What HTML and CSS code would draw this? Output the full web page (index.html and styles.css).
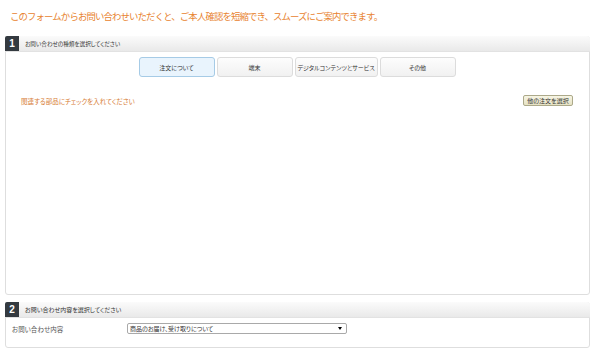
FILE: index.html
```html
<!DOCTYPE html>
<html lang="ja">
<head>
    <meta charset="UTF-8">
    <meta name="viewport" content="width=device-width, initial-scale=1.0">
    <title>お問い合わせ</title>
    <link rel="stylesheet" href="styles.css">
</head>
<body>
<p class="lead">このフォームからお問い合わせいただくと、ご本人確認を短縮でき、スムーズにご案内できます。</p>

<div class="section section-type">
    <div class="section-head">
        <span class="num">1</span>
        <span class="head-text">お問い合わせの種類を選択してください</span>
    </div>
    <div class="section-body">
        <div class="tabs">
            <button type="button" class="tab active">注文について</button>
            <button type="button" class="tab">端末</button>
            <button type="button" class="tab wide">デジタルコンテンツとサービス</button>
            <button type="button" class="tab">その他</button>
        </div>
        <div class="hint-row">
            <span class="hint">関連する部品にチェックを入れてください</span>
            <button type="button" class="small-btn">他の注文を選択</button>
        </div>
    </div>
</div>

<div class="section section-detail">
    <div class="section-head">
        <span class="num">2</span>
        <span class="head-text">お問い合わせ内容を選択してください</span>
    </div>
    <div class="section-body">
        <div class="field">
            <label class="field-label">お問い合わせ内容</label>
            <div class="select">商品のお届け、受け取りについて</div>
        </div>
    </div>
</div>
</body>
</html>
```

FILE: styles.css
```css
body {
    font-family: "Noto Sans CJK JP", "Noto Sans", sans-serif;
    font-feature-settings: "palt";
    margin: 0;
    padding: 0;
    background-color: #fff;
    color: #333;
}
.lead {
    margin: 0;
    padding: 9px 0 0 10px;
    height: 27px;
    box-sizing: border-box;
    font-size: 9.4px;
    letter-spacing: -0.85px;
    font-feature-settings: normal;
    line-height: 14px;
    color: #e8832f;
}
.section {
    margin: 0 10px 0 5px;
    border: 1px solid #dedede;
    border-radius: 3px;
    display: flex;
    flex-direction: column;
}
.section-type {
    margin-top: 9px;
    height: 259px;
    box-sizing: border-box;
}
.section-detail {
    margin-top: 7px;
    height: 46px;
    box-sizing: border-box;
}
.section-head {
    display: flex;
    align-items: center;
    height: 15px;
    margin: -1px -1px 0 -1px;
    background: linear-gradient(#fbfbfb, #e9e9e9);
    border-bottom: 1px solid #e2e2e2;
    border-radius: 3px 3px 0 0;
}
.num {
    width: 14px;
    height: 15px;
    background-color: #343a40;
    color: #fff;
    font-family: "Liberation Sans", Arial, sans-serif;
    font-weight: bold;
    font-size: 10px;
    line-height: 15px;
    text-align: center;
    border-radius: 2px 0 0 0;
}
.head-text {
    margin-left: 6px;
    font-size: 5.6px;
    color: #333;
}
.section-detail .head-text {
    font-size: 6px;
}
.section-body {
    flex: 1;
    padding: 5px 16px 0 15px;
}
.tabs {
    display: flex;
    justify-content: center;
    gap: 2px;
}
.tab {
    width: 76px;
    height: 20px;
    padding: 0;
    white-space: nowrap;
    font-family: inherit;
    font-feature-settings: "palt";
    font-size: 6px;
    color: #333;
    background: linear-gradient(#fdfdfd, #f1f1f1);
    border: 1px solid #dcdcdc;
    border-radius: 3px;
}
.tab.wide {
    width: 83px;
}
.tab.active {
    background: #e9f4fd;
    border-color: #a6cbe6;
}
.hint-row {
    display: flex;
    justify-content: space-between;
    align-items: center;
    margin-top: 18px;
}
.hint {
    font-size: 6.5px;
    color: #d77c34;
}
.small-btn {
    height: 11px;
    width: 50px;
    padding: 0;
    font-family: inherit;
    font-feature-settings: "palt";
    font-size: 6px;
    color: #333;
    background: linear-gradient(#f7f5e4, #e6e2c4);
    border: 1px solid #aca98a;
    border-radius: 2px;
}
.section-detail .section-body {
    padding: 5px 0 0 6px;
}
.field {
    display: flex;
    align-items: center;
}
.field-label {
    width: 115px;
    font-size: 6.5px;
    color: #555;
}
.select {
    position: relative;
    width: 216px;
    height: 9px;
    padding-left: 2px;
    font-size: 6px;
    line-height: 9px;
    color: #333;
    border: 1px solid #a9a9a9;
    border-radius: 2px;
}
.select::after {
    content: "";
    position: absolute;
    right: 4px;
    top: 3px;
    border-left: 2px solid transparent;
    border-right: 2px solid transparent;
    border-top: 3px solid #000;
}
```
